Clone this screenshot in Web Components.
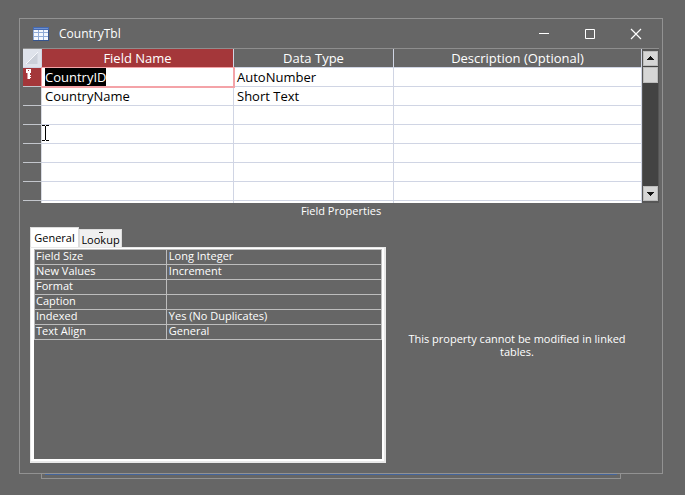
<!DOCTYPE html>
<html lang="en">
<head>
<meta charset="utf-8">
<title>CountryTbl</title>
<style>
  html { background: #666; }
  body {
    margin: 0; box-sizing: border-box; min-height: 100vh; padding: 18px 22px 16px 19px;
    display: flex; flex-direction: column; background: #666; color: #fff;
    font-family: "Open Sans", "Noto Sans", sans-serif; font-size: 11px; line-height: 13px;
  }
  mdi-window { flex: 1; }
</style>
</head>
<body>
<mdi-window heading="CountryTbl">
  <design-grid></design-grid>
  <field-properties></field-properties>
</mdi-window>
<back-window></back-window>

<script>
const define = (name, html, setup) => {
  const template = document.createElement('template');
  template.innerHTML = html;
  customElements.define(name, class extends HTMLElement {
    constructor() {
      super();
      this.attachShadow({ mode: 'open' }).append(template.content.cloneNode(true));
    }
    connectedCallback() { if (setup) setup(this, this.shadowRoot); }
  });
};

define('table-icon', `
<style>:host { display: block; width: 16px; height: 14px; } svg { display: block; }</style>
<svg width="16" height="14" viewBox="0 0 16 14" shape-rendering="crispEdges" aria-hidden="true">
  <rect width="16" height="14" fill="#8fabd8"/><rect width="16" height="3" fill="#4468b0"/>
  <path d="M1 1h14v1H1z" fill="#6f92cf"/><path d="M15 3h1v11H0v-1h15z" fill="#35548f"/>
  <path d="M1 3h4v2H1zM6 3h4v2H6zM11 3h4v2h-4zM1 6h4v3H1zM6 6h4v3H6zM11 6h4v3h-4zM1 10h4v3H1zM6 10h4v3H6zM11 10h4v3h-4z" fill="#f4f8ff"/>
</svg>`);

define('mdi-window', `
<style>
  :host { display: flex; flex-direction: column; border: 1px solid #929292; padding: 0 3px 10px; }
  header { display: flex; align-items: center; height: 29px; padding-left: 10px; }
  h1 { margin: 0 auto 0 10px; font-size: 12px; line-height: 16px; font-weight: 400; }
  button { width: 46px; height: 29px; padding: 0; border: 0; background: none; color: #fff; display: grid; place-items: center; }
  nav { display: flex; }
</style>
<header>
  <table-icon></table-icon><h1></h1>
  <nav aria-label="Window">
    <button aria-label="Minimize"><svg width="12" height="12"><path d="M1 5.5h10" stroke="#fff"/></svg></button>
    <button aria-label="Maximize"><svg width="12" height="12"><path d="M1.500 1.500h9v9h-9z" fill="none" stroke="#fff"/></svg></button>
    <button aria-label="Close"><svg width="12" height="12"><path d="M1 1l10 10M11 1L1 11" stroke="#fff" stroke-width="1.200"/></svg></button>
  </nav>
</header>
<slot></slot>`, (el, root) => { root.querySelector('h1').textContent = el.getAttribute('heading'); });

define('scroll-bar', `
<style>
  :host { display: flex; flex-direction: column; box-sizing: border-box; width: 17px; padding: 2px 1px 2px 1px; background: #565656; }
  button, i { display: grid; place-items: center; box-sizing: border-box; width: 15px; height: 15px; padding: 0; border: 1px solid #bcbcbc; background: #d6d6d6; }
  div { flex: 1; background: #434343; padding-top: 1px; }
  i { height: 16px; }
</style>
<button aria-label="Scroll up"><svg width="9" height="5" shape-rendering="crispEdges"><path d="M4 0h1v1h1v1h1v1h1v1H1V3h1V2h1V1h1z" fill="#151515"/></svg></button>
<div><i></i></div>
<button aria-label="Scroll down"><svg width="9" height="5" shape-rendering="crispEdges"><path d="M1 1h7v1H7v1H6v1H5v1H4V4H3V3H2V2H1z" fill="#151515"/></svg></button>`);

define('design-grid', `
<style>
  :host { display: flex; position: relative; border-top: 1px solid #8e8e8e; font-size: 13px; line-height: 18px; }
  table { flex: 1; min-width: 0; table-layout: fixed; border-collapse: separate; border-spacing: 0; width: 100%; }
  .sel { width: 19px; } .name { width: 192px; } .type { width: 160px; }
  th, td { box-sizing: border-box; height: 19px; padding: 0; border: solid #d0d5e4; border-width: 0 1px 1px 0; font-weight: 400; white-space: nowrap; }
  td { background: #fff; color: #000; padding-left: 3px; }
  tbody th { background: #666; border-color: #c3c6cc #d8dbe3 #c3c6cc #c3c6cc; }
  thead th.active, tbody .current th { background: #a4373a; }
  .corner { background: #dfe3eb; }
  .current td:nth-child(2) { position: relative; }
  .current td:nth-child(2)::after { content: ""; position: absolute; inset: -1px -2px -2px -1px; border: 2px solid #f4a3a8; border-width: 1px 2px 2px 1px; pointer-events: none; }
  input { display: block; field-sizing: content; height: 18px; padding: 0; border: 0; outline: 0; font: inherit; background: #000; color: #fff; }
  .tail th, .tail td { height: 2px; border-bottom: 0; }
  svg { display: block; }
  .beam { position: absolute; left: 19px; top: 76px; }
</style>
<table>
  <colgroup><col class="sel"><col class="name"><col class="type"><col></colgroup>
  <thead><tr>
    <th class="corner" aria-label="Select all"><svg width="18" height="18"><path d="M14.500 3v12H3z" fill="#cbd0d9"/><path d="M3 15L15 3" stroke="#f7f9fc"/></svg></th>
    <th class="active">Field Name</th><th>Data Type</th><th>Description (Optional)</th>
  </tr></thead>
  <tbody>
    <tr class="current">
      <th aria-label="Primary key"><svg width="18" height="18" shape-rendering="crispEdges"><path fill="#fff" fill-rule="evenodd" d="M3 1h5v4H7v2h1v1H7v1h1v1H7v1H5V5H3zM5 2v1h1V2z"/><path d="M4 5h1v6H4z" fill="#d79c9e"/></svg></th>
      <td><input value="CountryID" aria-label="Field Name"></td><td>AutoNumber</td><td></td>
    </tr>
    <tr><th></th><td>CountryName</td><td>Short Text</td><td></td></tr>
    <tr><th></th><td></td><td></td><td></td></tr>
    <tr><th></th><td></td><td></td><td></td></tr>
    <tr><th></th><td></td><td></td><td></td></tr>
    <tr><th></th><td></td><td></td><td></td></tr>
    <tr><th></th><td></td><td></td><td></td></tr>
    <tr class="tail"><th></th><td></td><td></td><td></td></tr>
  </tbody>
</table>
<scroll-bar></scroll-bar>
<svg class="beam" width="8" height="16" shape-rendering="crispEdges" aria-hidden="true"><path d="M0 0h3v1h1V0h3v1H4v14h3v1H4v-1H3v1H0v-1h3V1H0z" fill="#000"/></svg>`);

define('property-sheet', `
<style>
  :host { display: flex; flex-direction: column; width: 356px; }
  [role=tablist] { display: flex; align-items: flex-end; }
  button { position: relative; box-sizing: border-box; border: 1px solid #dcdcdc; border-bottom: 0; font: inherit; color: #000; background: #f0f0f0; height: 18px; width: 43px; padding: 2px 0 0; }
  button[aria-selected=true] { background: #fff; height: 20px; width: 49px; padding: 0; }
  button:last-child::before { content: ""; position: absolute; left: 19px; top: 2px; width: 4px; height: 1px; background: #333; }
  [role=tabpanel] { flex: 1; box-sizing: border-box; padding: 1px 2px 2px 3px; border: 1px solid #e9e9e9; border-width: 1px 2px 2px 1px; background: linear-gradient(#666, #666) content-box, #fff; }
  table { width: 100%; table-layout: fixed; border-collapse: collapse; line-height: 12px; }
  col:first-child { width: 38%; }
  th, td { box-sizing: border-box; height: 15px; padding: 0 0 1px 2px; border: 1px solid #bdbdbd; font-weight: 400; text-align: left; vertical-align: top; }
  th { padding-left: 1px; }
</style>
<div role="tablist"><button role="tab" aria-selected="true">General</button><button role="tab" aria-selected="false">Lookup</button></div>
<div role="tabpanel" aria-label="General"><table><colgroup><col><col></colgroup><tbody>
  <tr><th>Field Size</th><td>Long Integer</td></tr>
  <tr><th>New Values</th><td>Increment</td></tr>
  <tr><th>Format</th><td></td></tr>
  <tr><th>Caption</th><td></td></tr>
  <tr><th>Indexed</th><td>Yes (No Duplicates)</td></tr>
  <tr><th>Text Align</th><td>General</td></tr>
</tbody></table></div>`);

define('field-properties', `
<style>
  :host { flex: 1; display: flex; flex-direction: column; }
  h2 { margin: 0; padding: 1px 0 9px; font-size: 11px; line-height: 14px; font-weight: 400; text-align: center; }
  section { flex: 1; display: flex; padding: 0 7px; }
  p { flex: 1; margin: 0; padding: 0 4px 1px 0; display: flex; align-items: center; justify-content: center; text-align: center; }
  span { max-width: 240px; }
</style>
<h2>Field Properties</h2>
<section><property-sheet></property-sheet><p><span>This property cannot be modified in linked tables.</span></p></section>`);

define('back-window', `
<style>
  :host { display: block; box-sizing: border-box; height: 5px; margin: 0 42px 0 22px; padding: 0 3px; border: solid #929292; border-width: 0 1px 1px; }
  div { height: 1px; background: #44659c; }
</style><div></div>`);
</script>
</body>
</html>
